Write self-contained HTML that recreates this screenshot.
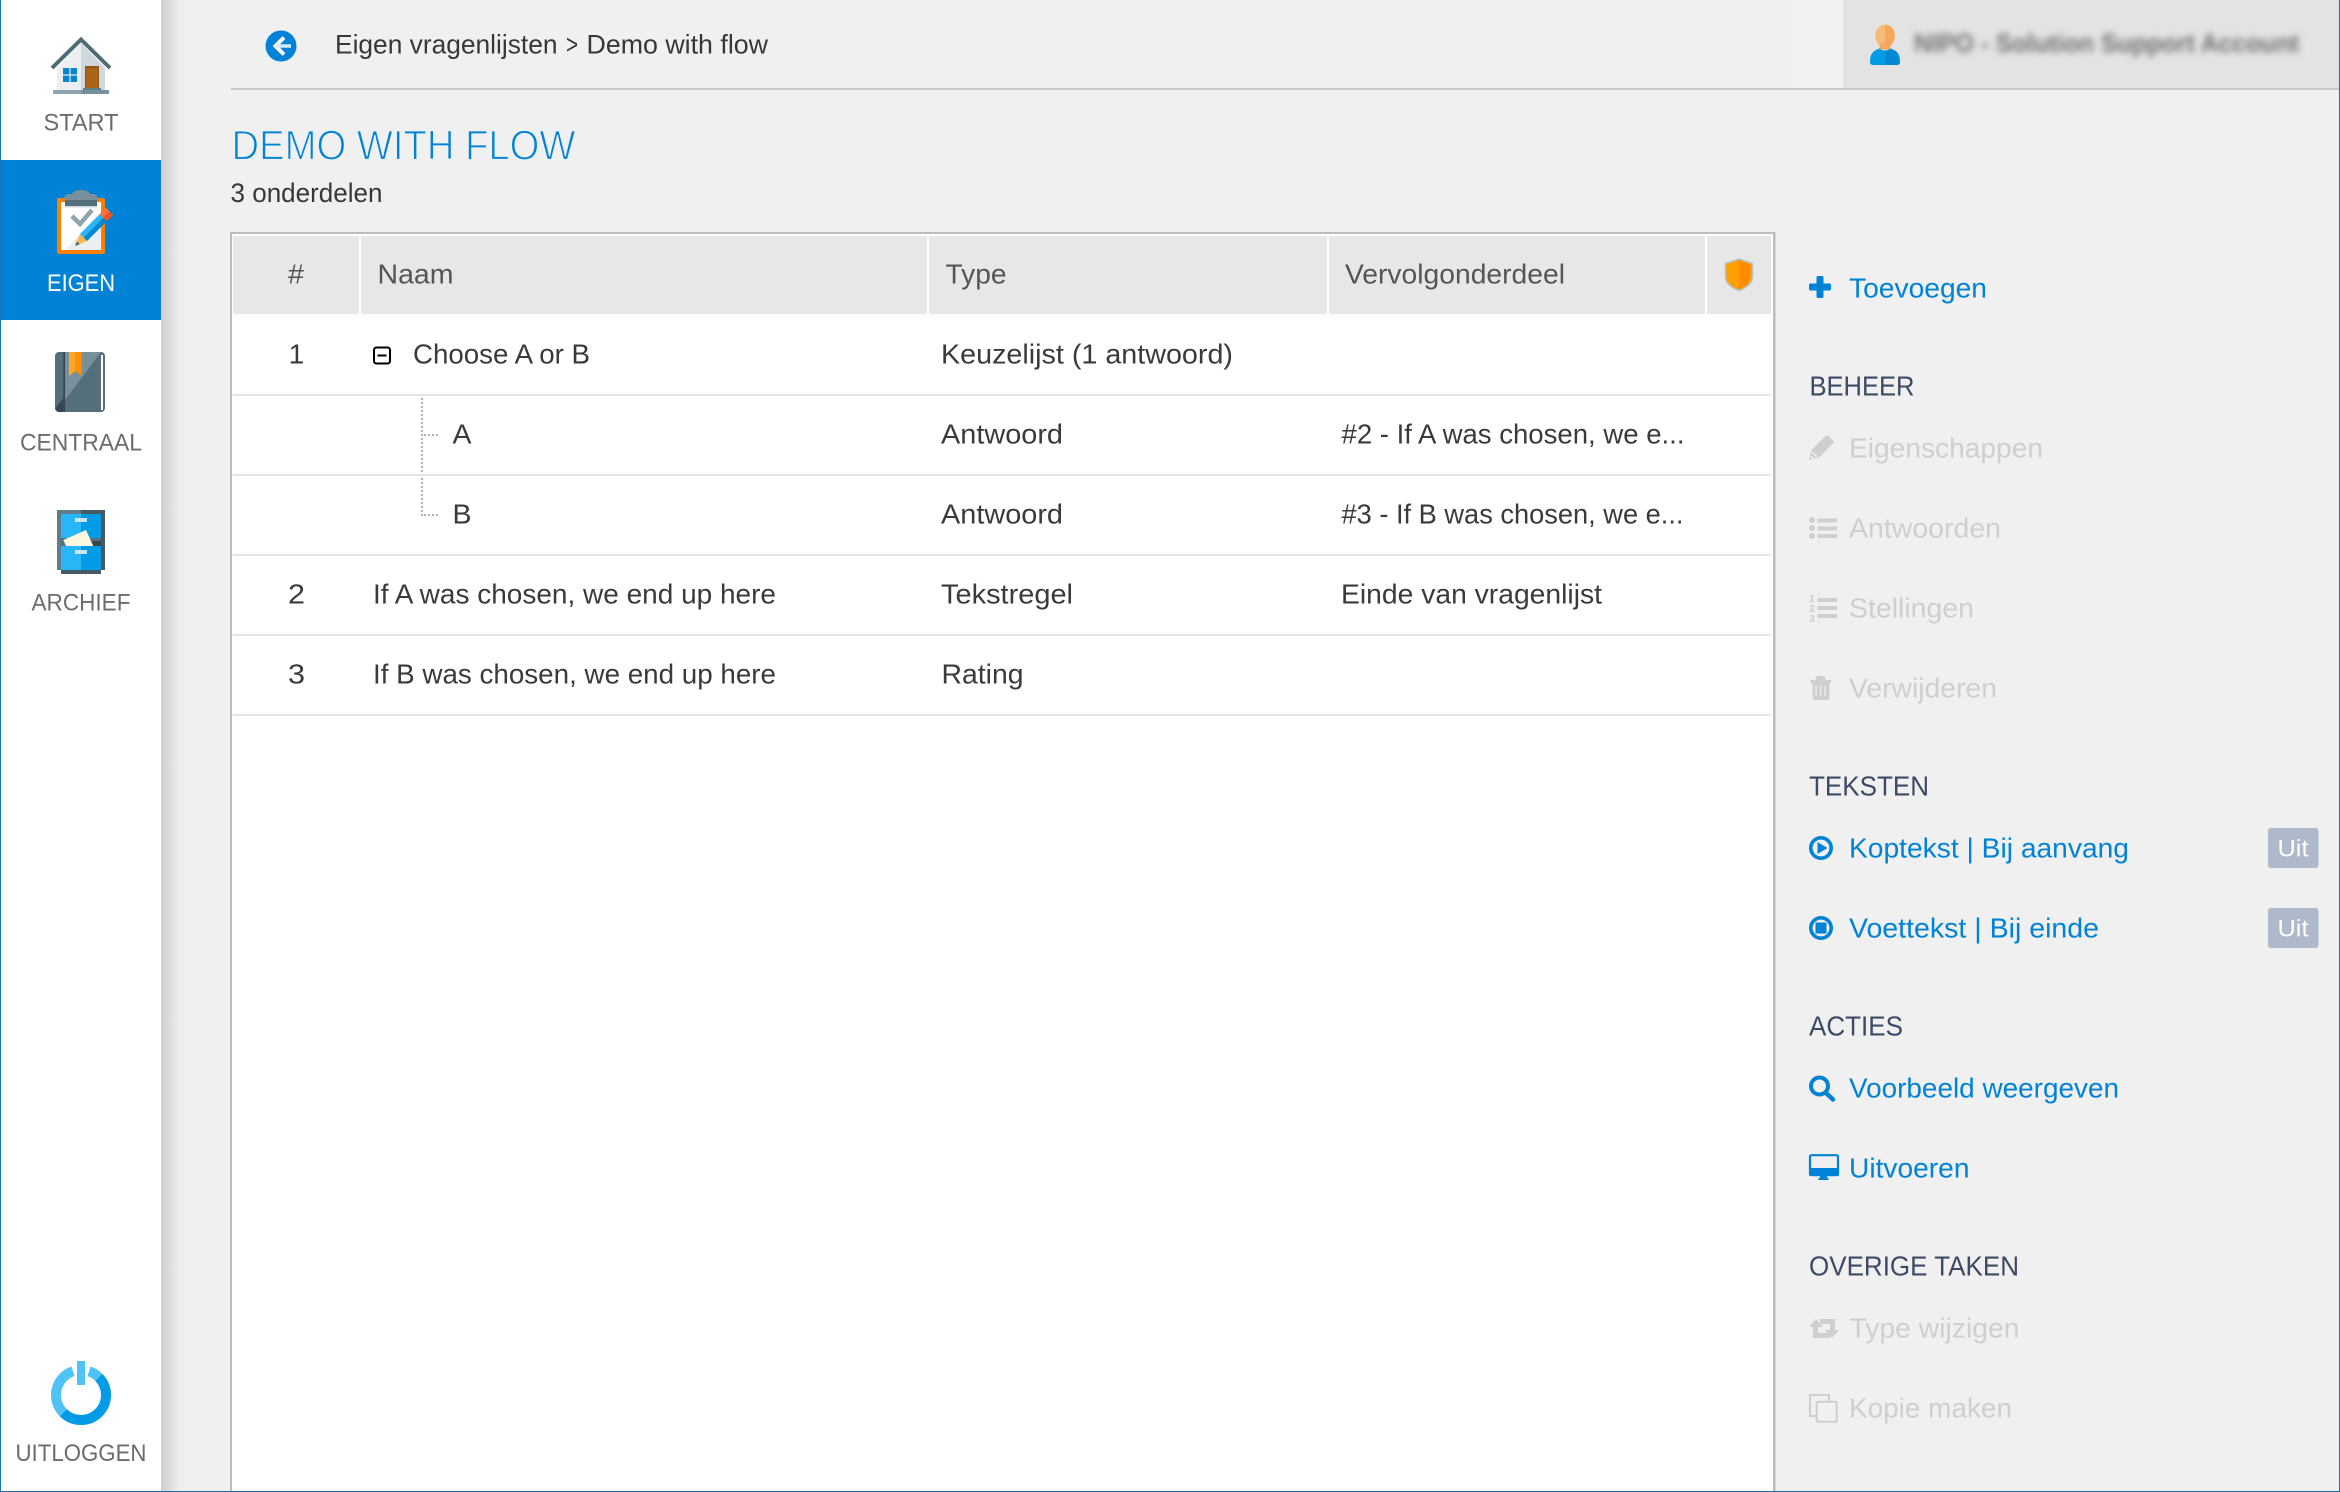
<!DOCTYPE html>
<html lang="nl">
<head>
<meta charset="utf-8">
<title>Demo with flow</title>
<style>
html,body{margin:0;padding:0;width:2340px;height:1492px;overflow:hidden;background:#f0f0f0}
svg{display:block}
text{font-family:"Liberation Sans",Arial,sans-serif;font-size:28px;white-space:pre}
.n{font-size:24px;fill:#6c6c6c}
.c{fill:#3a3a3a}
.h{fill:#555}
.b{fill:#0082d6}
.s{fill:#3c4a66}
.d{fill:#cfcfcf}
.k{font-size:26.5px;fill:#383838}
</style>
</head>
<body>
<svg xmlns="http://www.w3.org/2000/svg" width="2340" height="1492" viewBox="0 0 2340 1492">
<defs>
<linearGradient id="sh" x1="0" x2="1" y1="0" y2="0"><stop offset="0" stop-color="#cfcfcf"/><stop offset=".35" stop-color="#dcdcdc"/><stop offset=".7" stop-color="#ebebeb"/><stop offset="1" stop-color="#f0f0f0"/></linearGradient>
<linearGradient id="hd" x1="0" x2="1" y1="0" y2="0"><stop offset="0" stop-color="#f0f0f0"/><stop offset="1" stop-color="#f3f3f3"/></linearGradient>
<filter id="bl" x="-5%" y="-50%" width="110%" height="200%"><feGaussianBlur stdDeviation="3.4"/></filter>
</defs>
<rect width="2340" height="1492" fill="#f0f0f0"/>

<!-- sidebar -->
<rect x="161" y="0" width="24" height="1492" fill="url(#sh)"/>
<rect x="0" y="0" width="161" height="1492" fill="#fff"/>
<rect x="1" y="160" width="160" height="160" fill="#0082d6"/>

<!-- house -->
<polygon points="57,68 81,43 81,90 57,90" fill="#eceff1"/>
<polygon points="81,43 105,68 105,90 81,90" fill="#cfd8dc"/>
<polyline points="52,68 81,39.5 110,68" fill="none" stroke="#4f6b78" stroke-width="4" stroke-linejoin="miter"/>
<rect x="85" y="66" width="14" height="22" fill="#8d5a1e"/><rect x="86" y="68" width="12" height="20" fill="#a86419"/>
<rect x="83" y="88" width="18" height="2" fill="#607d8b"/>
<rect x="53" y="90" width="28" height="4" fill="#90a4ae"/><rect x="81" y="90" width="28" height="4" fill="#78909c"/>
<g fill="#0a84cc"><rect x="63" y="68" width="6.4" height="6.4"/><rect x="70.6" y="68" width="6.4" height="6.4"/><rect x="63" y="75.6" width="6.4" height="6.4"/><rect x="70.6" y="75.6" width="6.4" height="6.4"/></g>
<text class="n" x="43.5" y="130.5" textLength="75" lengthAdjust="spacingAndGlyphs">START</text>

<!-- clipboard -->
<rect x="57" y="198" width="48" height="56" rx="2" fill="#ff7f00"/>
<rect x="61" y="202" width="40" height="48" fill="#fff"/>
<polygon points="101,212 101,250 65,250" fill="#eceff1"/>
<rect x="65" y="206" width="32" height="1.5" fill="#cfd8dc"/>
<path d="M65 200a4 4 0 0 1 4-6h3c2-4 6-4 9-4s7 0 9 4h3a4 4 0 0 1 4 6z" fill="#78909c"/>
<rect x="65" y="200" width="32" height="6" fill="#546e7a"/>
<polyline points="72,216 80,224 92,210" fill="none" stroke="#90a4ae" stroke-width="4.5"/>
<polygon points="79.95,233.95 83.5,237.5 103.3,217.7 99.75,214.15" fill="#29b6f6"/>
<polygon points="83.5,237.5 87.05,241.05 106.85,221.25 103.3,217.7" fill="#0288d1"/>
<polygon points="99.75,214.15 103.3,217.7 109.65,211.35 106.1,207.8" fill="#ff7043"/>
<polygon points="103.3,217.7 106.85,221.25 113.2,214.9 109.65,211.35" fill="#f4511e"/>
<polygon points="75,246 79.95,233.95 87.05,241.05" fill="#ffb74d"/>
<polygon points="75,246 76.7,241.2 79.8,244.3" fill="#546e7a"/>
<text x="47" y="291" font-size="24" style="font-size:24px" fill="#fff" textLength="68" lengthAdjust="spacingAndGlyphs">EIGEN</text>

<!-- book -->
<rect x="55" y="352" width="50" height="60" rx="4" fill="#546e7a"/>
<polygon points="65,352 101,352 65,400" fill="#78909c"/>
<rect x="63.3" y="352" width="1.8" height="60" fill="#37474f"/>
<polygon points="55,409 63.3,398 63.3,412 58,412" fill="#37474f"/>
<rect x="101" y="355" width="2" height="55" fill="#fff"/>
<polygon points="69,352 75.3,352 75.3,371 69,376" fill="#ffa726"/>
<polygon points="75.3,352 81.7,352 81.7,376 75.3,371" fill="#ff8f00"/>
<text class="n" x="20" y="450.5" textLength="122" lengthAdjust="spacingAndGlyphs">CENTRAAL</text>

<!-- cabinet -->
<rect x="57" y="510" width="24" height="60" fill="#607d8b"/><rect x="81" y="510" width="24" height="60" fill="#455a64"/>
<rect x="61" y="570" width="40" height="4" fill="#455a64"/>
<rect x="61" y="514" width="20" height="24" fill="#29b6f6"/><rect x="81" y="514" width="20" height="24" fill="#039be5"/>
<rect x="75" y="518" width="12" height="4" fill="#cfe3ee"/>
<rect x="61" y="538" width="40" height="8" fill="#546e7a"/><rect x="85" y="541" width="16" height="5" fill="#37474f"/>
<polygon points="63.3,540 86,530 93.3,546 66,546" fill="#fff8e1"/>
<rect x="61" y="546" width="20" height="24" fill="#29b6f6"/><rect x="81" y="546" width="20" height="24" fill="#039be5"/>
<rect x="75" y="550" width="12" height="4" fill="#cfe3ee"/>
<text class="n" x="31.5" y="610.5" textLength="99" lengthAdjust="spacingAndGlyphs">ARCHIEF</text>

<!-- power -->
<path d="M73 1371.3A25 25 0 0 0 63.3 1412.7" fill="none" stroke="#4fc3f7" stroke-width="10"/>
<path d="M89 1371.3A25 25 0 0 1 98.7 1377.3" fill="none" stroke="#4fc3f7" stroke-width="10"/>
<path d="M98.7 1377.3A25 25 0 0 1 63.3 1412.7" fill="none" stroke="#039be5" stroke-width="10"/>
<rect x="77" y="1361" width="8" height="24" fill="#4fc3f7"/>
<text class="n" x="15.5" y="1461" textLength="131" lengthAdjust="spacingAndGlyphs">UITLOGGEN</text>

<!-- header -->
<rect x="1780" y="0" width="63" height="88" fill="url(#hd)"/>
<rect x="1843" y="0" width="496" height="88" fill="#e3e3e3"/>
<rect x="231" y="88" width="2108" height="2" fill="#c8c8c8"/>
<circle cx="281" cy="46" r="15.5" fill="#0082d6"/>
<polyline points="284,37.5 275.5,46 284,54.5" fill="none" stroke="#fff" stroke-width="4"/>
<line x1="276" y1="46" x2="291" y2="46" stroke="#d6eaf8" stroke-width="3.5"/>
<text class="k" x="335" y="53.3" textLength="222.5" lengthAdjust="spacingAndGlyphs">Eigen vragenlijsten</text>
<text class="k" x="566" y="53.3" textLength="12" lengthAdjust="spacingAndGlyphs">&gt;</text>
<text class="k" x="586.5" y="53.3" textLength="181.5" lengthAdjust="spacingAndGlyphs">Demo with flow</text>

<!-- user -->
<ellipse cx="1885" cy="36" rx="9.8" ry="11.5" fill="#f6bb7a"/>
<path d="M1885 24.5a9.8 11.5 0 0 1 0 23z" fill="#f4a85c"/>
<rect x="1879.5" y="43" width="11" height="6.5" fill="#f4a85c"/>
<path d="M1870 62c0-7 2-11 9.5-13.5c2 1.5 3.500 2 5.500 2v14.500h-11c-3 0-4-1-4-3z" fill="#039be5"/>
<path d="M1900 62c0-7-2-11-9.500-13.500c-2 1.500-3.500 2-5.500 2v14.500h11c3 0 4-1 4-3z" fill="#0288d1"/>
<text x="1914" y="52" fill="#707070" filter="url(#bl)" textLength="385" lengthAdjust="spacingAndGlyphs" style="font-size:26px;font-weight:bold">NIPO - Solution Support Account</text>

<!-- title -->
<text x="231.5" y="159.5" style="font-size:41.5px" fill="#0082d6" stroke="#f0f0f0" stroke-width="1.2" textLength="344" lengthAdjust="spacingAndGlyphs">DEMO WITH FLOW</text>
<text class="k" x="230.5" y="202" textLength="152" lengthAdjust="spacingAndGlyphs">3 onderdelen</text>

<!-- table -->
<rect x="230" y="232" width="1545.500" height="1260" fill="#bdbdbd"/>
<rect x="232" y="234" width="1541" height="1258" fill="#fff"/>
<g fill="#e7e7e7">
<rect x="233" y="236" width="126" height="78"/>
<rect x="361" y="236" width="566" height="78"/>
<rect x="929" y="236" width="398" height="78"/>
<rect x="1329" y="236" width="376" height="78"/>
<rect x="1707" y="236" width="64" height="78"/>
</g>
<g fill="#e4e4e4">
<rect x="233" y="394" width="1538" height="2"/>
<rect x="233" y="474" width="1538" height="2"/>
<rect x="233" y="554" width="1538" height="2"/>
<rect x="233" y="634" width="1538" height="2"/>
<rect x="233" y="714" width="1538" height="2"/>
</g>
<text class="h" x="288" y="283.700" textLength="16" lengthAdjust="spacingAndGlyphs">#</text>
<text class="h" x="377.500" y="283.700" textLength="76" lengthAdjust="spacingAndGlyphs">Naam</text>
<text class="h" x="945.500" y="283.700" textLength="61" lengthAdjust="spacingAndGlyphs">Type</text>
<text class="h" x="1345" y="283.700" textLength="220" lengthAdjust="spacingAndGlyphs">Vervolgonderdeel</text>
<path d="M1739 259l13.500 4.500v13.500c0 6-6.500 11-13.500 13.500c-7-2.500-13.500-7.500-13.500-13.500v-13.500z" fill="#ffa000" stroke="#b4c2c9" stroke-width="1.500"/>
<path d="M1739 261l11.500 3.500v12.500c0 5-5.500 9.500-11.500 11.500z" fill="#ff8c00"/>

<text class="c" x="288.700" y="363.700" textLength="15.600" lengthAdjust="spacingAndGlyphs">1</text>
<text class="c" x="288" y="603.700" textLength="17" lengthAdjust="spacingAndGlyphs">2</text>
<text class="c" x="288" y="683.700" textLength="17" lengthAdjust="spacingAndGlyphs">3</text>
<rect x="374" y="347.500" width="16" height="16" rx="2.500" fill="#fff" stroke="#000" stroke-width="2"/>
<rect x="377.500" y="354.500" width="9" height="2" fill="#000"/>
<text class="c" x="413" y="363.700" textLength="177" lengthAdjust="spacingAndGlyphs">Choose A or B</text>
<g fill="none" stroke="#aaa" stroke-width="1.800" stroke-dasharray="2 2">
<line x1="422" y1="398" x2="422" y2="472"/><line x1="422" y1="478" x2="422" y2="516"/>
<line x1="424" y1="435" x2="440" y2="435"/><line x1="424" y1="515" x2="440" y2="515"/>
</g>
<text class="c" x="452.500" y="443.700" textLength="19" lengthAdjust="spacingAndGlyphs">A</text>
<text class="c" x="452.500" y="523.700" textLength="19" lengthAdjust="spacingAndGlyphs">B</text>
<text class="c" x="373" y="603.700" textLength="403" lengthAdjust="spacingAndGlyphs">If A was chosen, we end up here</text>
<text class="c" x="373" y="683.700" textLength="403" lengthAdjust="spacingAndGlyphs">If B was chosen, we end up here</text>
<text class="c" x="941" y="363.700" textLength="292" lengthAdjust="spacingAndGlyphs">Keuzelijst (1 antwoord)</text>
<text class="c" x="941" y="443.700" textLength="122" lengthAdjust="spacingAndGlyphs">Antwoord</text>
<text class="c" x="941" y="523.700" textLength="122" lengthAdjust="spacingAndGlyphs">Antwoord</text>
<text class="c" x="941" y="603.700" textLength="132" lengthAdjust="spacingAndGlyphs">Tekstregel</text>
<text class="c" x="941.500" y="683.700" textLength="82" lengthAdjust="spacingAndGlyphs">Rating</text>
<text class="c" x="1341.500" y="443.700" textLength="343" lengthAdjust="spacingAndGlyphs">#2 - If A was chosen, we e...</text>
<text class="c" x="1341.500" y="523.700" textLength="342" lengthAdjust="spacingAndGlyphs">#3 - If B was chosen, we e...</text>
<text class="c" x="1341" y="603.700" textLength="261" lengthAdjust="spacingAndGlyphs">Einde van vragenlijst</text>

<!-- right panel -->
<rect x="1816.500" y="276" width="7" height="22" rx="1.500" fill="#0082d6"/><rect x="1809" y="283.500" width="22" height="7" rx="1.500" fill="#0082d6"/>
<text class="b" x="1849" y="297.700" textLength="138" lengthAdjust="spacingAndGlyphs">Toevoegen</text>

<text class="s" x="1809.500" y="395.700" textLength="105" lengthAdjust="spacingAndGlyphs">BEHEER</text>
<path d="M1809 460l2.500-10l14-14c1-1 2-1 3 0l4.500 4.500c1 1 1 2 0 3l-14 14z" fill="#cfcfcf"/>
<path d="M1812 452l5 5M1811 456.500l2.500 2.500" stroke="#f0f0f0" stroke-width="1.500" fill="none"/>
<text class="d" x="1849" y="457.700" textLength="194" lengthAdjust="spacingAndGlyphs">Eigenschappen</text>
<g fill="#cfcfcf">
<circle cx="1812" cy="520" r="3"/><circle cx="1812" cy="528" r="3"/><circle cx="1812" cy="536" r="3"/>
<rect x="1817.500" y="518.500" width="19.500" height="4"/><rect x="1817.500" y="526.500" width="19.500" height="4"/><rect x="1817.500" y="534" width="19.500" height="4"/>
</g>
<text class="d" x="1849" y="537.700" textLength="152" lengthAdjust="spacingAndGlyphs">Antwoorden</text>
<g fill="#cfcfcf">
<rect x="1817.500" y="598" width="19.500" height="4"/><rect x="1817.500" y="606" width="19.500" height="4"/><rect x="1817.500" y="614" width="19.500" height="4"/>
<text x="1809" y="602" style="font-size:10px;font-weight:bold" textLength="6" lengthAdjust="spacingAndGlyphs">1</text>
<text x="1809" y="612" style="font-size:10px;font-weight:bold" textLength="6" lengthAdjust="spacingAndGlyphs">2</text>
<text x="1809" y="622" style="font-size:10px;font-weight:bold" textLength="6" lengthAdjust="spacingAndGlyphs">3</text>
</g>
<text class="d" x="1849" y="617.700" textLength="125" lengthAdjust="spacingAndGlyphs">Stellingen</text>
<path d="M1810 680h5l1.500-3.500c.3-.4.6-.5 1-.5h6c.4 0 .7.1 1 .5l1.500 3.500h5v3h-1.500v14.500c0 1.500-1 2.500-2.500 2.500h-12c-1.500 0-2.500-1-2.500-2.500v-14.500h-1.500z" fill="#cfcfcf"/>
<path d="M1816 686v10M1820.500 686v10M1825 686v10" stroke="#f0f0f0" stroke-width="1.300"/>
<text class="d" x="1849" y="697.700" textLength="148" lengthAdjust="spacingAndGlyphs">Verwijderen</text>

<text class="s" x="1809" y="795.700" textLength="120" lengthAdjust="spacingAndGlyphs">TEKSTEN</text>
<circle cx="1821" cy="848" r="10.200" fill="none" stroke="#0082d6" stroke-width="3.600"/>
<polygon points="1817.500,842 1817.500,854 1827.500,848" fill="#0082d6"/>
<text class="b" x="1849" y="857.700" textLength="280" lengthAdjust="spacingAndGlyphs">Koptekst | Bij aanvang</text>
<rect x="2268" y="828" width="50.500" height="40" rx="3" fill="#aeb9cb"/>
<text x="2277.500" y="856.700" style="font-size:24px" fill="#fff" textLength="31" lengthAdjust="spacingAndGlyphs">Uit</text>
<circle cx="1821" cy="928" r="10.200" fill="none" stroke="#0082d6" stroke-width="3.600"/>
<rect x="1815.500" y="922.500" width="11" height="11" fill="#0082d6"/>
<text class="b" x="1849" y="937.700" textLength="250" lengthAdjust="spacingAndGlyphs">Voettekst | Bij einde</text>
<rect x="2268" y="908" width="50.500" height="40" rx="3" fill="#aeb9cb"/>
<text x="2277.500" y="936.700" style="font-size:24px" fill="#fff" textLength="31" lengthAdjust="spacingAndGlyphs">Uit</text>

<text class="s" x="1809" y="1035.700" textLength="94" lengthAdjust="spacingAndGlyphs">ACTIES</text>
<circle cx="1819.500" cy="1086" r="8.500" fill="none" stroke="#0082d6" stroke-width="4"/>
<line x1="1826" y1="1093" x2="1833" y2="1099.500" stroke="#0082d6" stroke-width="4.500" stroke-linecap="round"/>
<text class="b" x="1849" y="1097.700" textLength="270" lengthAdjust="spacingAndGlyphs">Voorbeeld weergeven</text>
<rect x="1810" y="1155.200" width="28" height="20" rx="1.500" fill="none" stroke="#0082d6" stroke-width="2.200"/>
<rect x="1809" y="1168" width="30" height="8" rx="1.500" fill="#0082d6"/>
<rect x="1820" y="1176" width="7" height="2" fill="#0082d6"/><rect x="1818.500" y="1178" width="10" height="2" fill="#0082d6"/>
<text class="b" x="1849" y="1177.700" textLength="120.500" lengthAdjust="spacingAndGlyphs">Uitvoeren</text>

<text class="s" x="1809" y="1275.700" textLength="210" lengthAdjust="spacingAndGlyphs">OVERIGE TAKEN</text>
<g fill="#cfcfcf">
<polygon points="1809,1327 1816,1319 1823,1327"/><rect x="1813" y="1327" width="5" height="11"/><rect x="1813" y="1333" width="17" height="5"/>
<rect x="1820" y="1319" width="15" height="5"/><rect x="1830" y="1319" width="5" height="11"/><polygon points="1825,1330 1839,1330 1832,1338"/>
</g>
<text class="d" x="1849.500" y="1337.700" textLength="170" lengthAdjust="spacingAndGlyphs">Type wijzigen</text>
<path d="M1815.700 1416H1810V1395H1829V1400.700" fill="none" stroke="#cfcfcf" stroke-width="2"/>
<rect x="1816.700" y="1401.700" width="20" height="20" rx="1" fill="none" stroke="#cfcfcf" stroke-width="2"/>
<text class="d" x="1849" y="1417.700" textLength="163" lengthAdjust="spacingAndGlyphs">Kopie maken</text>

<!-- outer frame -->
<rect x="0" y="0" width="1" height="1492" fill="#1b75bc"/>
<rect x="2339" y="0" width="1" height="1492" fill="#2a6d9b"/>
<rect x="0" y="1491" width="2340" height="1" fill="#1f6a9e"/>
</svg>
</body>
</html>
